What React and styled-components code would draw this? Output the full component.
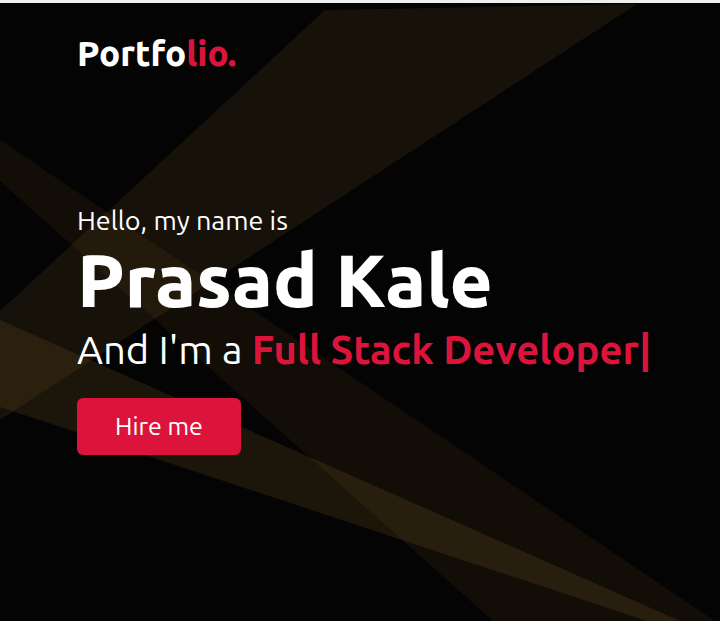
import React from "react";
import styled, { createGlobalStyle } from "styled-components";

const GlobalStyle = createGlobalStyle`
  * { box-sizing: border-box; }
  body {
    margin: 0;
    background: #040404;
    color: #ffffff;
    font-family: Ubuntu, "Noto Sans", sans-serif;
    font-weight: 400;
  }
`;

const Page = styled.div`
  position: relative;
  isolation: isolate;
  min-height: 100vh;
  overflow: hidden;
  border-top: 3px solid #efefef;
  background: #040404;
`;

const Backdrop = styled.svg`
  position: absolute;
  inset: 0;
  z-index: -1;
  width: 100%;
  height: 100%;
`;

const Header = styled.header`
  padding: 30px 77px;
`;

const Logo = styled.a`
  display: inline-block;
  color: #ffffff;
  font-size: 35px;
  line-height: 40px;
  font-weight: 800;
  text-decoration: none;
`;

const Accent = styled.span`
  color: #dc143c;
  font-weight: ${({ $weight }) => $weight};
`;

const Hero = styled.main`
  padding: 99px 0 0 77px;
`;

const Greeting = styled.p`
  margin: 0;
  font-size: 27px;
  line-height: 36px;
`;

const Name = styled.h1`
  margin: 0;
  font-size: 74px;
  line-height: 84px;
  font-weight: 800;
`;

const Role = styled.p`
  margin: 0;
  font-size: 40px;
  line-height: 56px;
`;

const HireButton = styled.button`
  margin-top: 20px;
  padding: 10px 36px;
  border: 2px solid #dc143c;
  border-radius: 6px;
  background: #dc143c;
  color: #ffffff;
  font-family: inherit;
  font-size: 25px;
  font-weight: inherit;
  line-height: 33px;
  cursor: pointer;
`;

function Beams() {
  return (
    <Backdrop viewBox="0 3 720 618" preserveAspectRatio="xMinYMin slice" aria-hidden="true">
      <g fill="#c8963c">
        <polygon points="325,10 637,4 0,420 0,311" fillOpacity="0.095" />
        <polygon points="0,140 715,621 493,621 0,181" fillOpacity="0.073" />
        <polygon points="0,320 680,621 647,621 0,407" fillOpacity="0.12" />
      </g>
    </Backdrop>
  );
}

export default function App() {
  return (
    <>
      <GlobalStyle />
      <Page>
        <Beams />
        <Header>
          <Logo href="#home">
            Portfo<Accent $weight={800}>lio.</Accent>
          </Logo>
        </Header>
        <Hero>
          <Greeting>Hello, my name is</Greeting>
          <Name>Prasad Kale</Name>
          <Role>
            And I'm a <Accent $weight={600}>Full Stack Developer|</Accent>
          </Role>
          <HireButton type="button">Hire me</HireButton>
        </Hero>
      </Page>
    </>
  );
}
